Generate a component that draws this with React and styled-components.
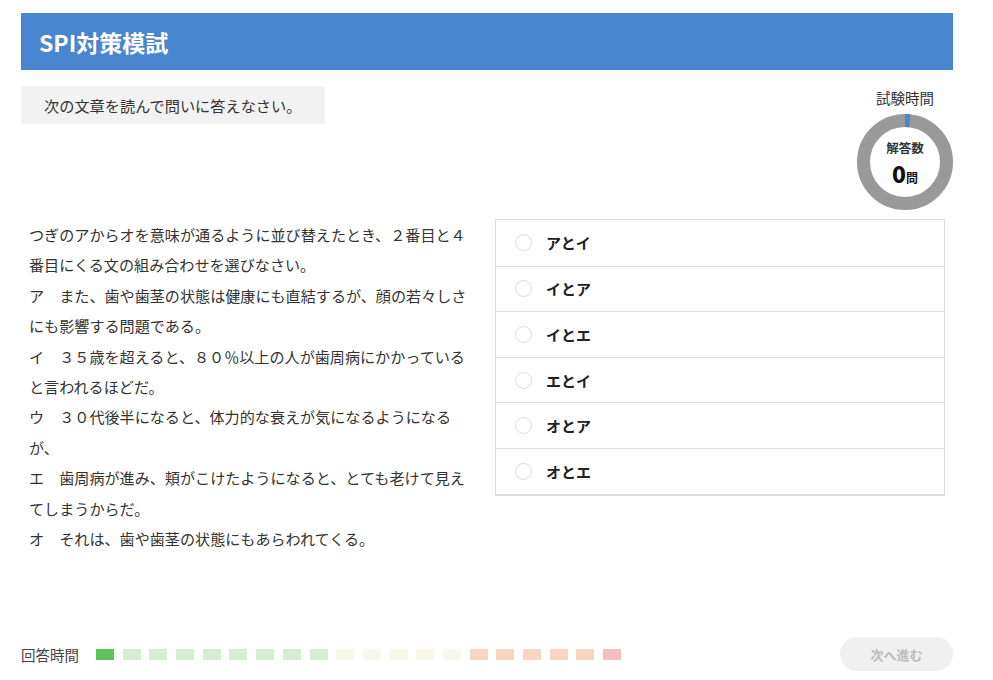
import React from "react";
import styled, { createGlobalStyle } from "styled-components";

const GlobalStyle = createGlobalStyle`
  body {
    margin: 0;
    background: #fff;
    font-family: "Noto Sans CJK JP", "Noto Sans", sans-serif;
    color: #333;
  }
`;

const question = [
  "つぎのアからオを意味が通るように並び替えたとき、２番目と４番目にくる文の組み合わせを選びなさい。",
  "ア　また、歯や歯茎の状態は健康にも直結するが、顔の若々しさにも影響する問題である。",
  "イ　３５歳を超えると、８０％以上の人が歯周病にかかっていると言われるほどだ。",
  "ウ　３０代後半になると、体力的な衰えが気になるようになるが、",
  "エ　歯周病が進み、頬がこけたようになると、とても老けて見えてしまうからだ。",
  "オ　それは、歯や歯茎の状態にもあらわれてくる。",
];

const choices = ["アとイ", "イとア", "イとエ", "エとイ", "オとア", "オとエ"];

const meter = [
  "#5ec45a",
  "#d5eed2", "#d5eed2", "#d5eed2", "#d5eed2", "#d5eed2", "#d5eed2", "#d5eed2", "#d5eed2",
  "#f8f7e9", "#f8f7e9", "#f8f7e9", "#f8f7e9", "#f8f7e9",
  "#f6d6c2", "#f6d6c2", "#f6d6c2", "#f6d6c2", "#f6d6c2",
  "#f4bdc0",
];

const Donut = () => {
  const r = 41.5;
  const c = 2 * Math.PI * r;
  return (
    <svg width="96" height="96" viewBox="0 0 96 96">
      <circle cx="48" cy="48" r={r} fill="none" stroke="#999" strokeWidth="13" />
      <circle
        cx="48"
        cy="48"
        r={r}
        fill="none"
        stroke="#4a86cf"
        strokeWidth="13"
        strokeDasharray={`5 ${c}`}
        transform="rotate(-90 48 48)"
      />
    </svg>
  );
};

const App = () => {
  return (
    <Page>
      <GlobalStyle />
      <Header>SPI対策模試</Header>

      <TopRow>
        <Instruction>次の文章を読んで問いに答えなさい。</Instruction>
        <Timer>
          <TimerLabel>試験時間</TimerLabel>
          <DonutWrap>
            <Donut />
            <DonutCenter>
              <CountLabel>解答数</CountLabel>
              <Count>
                0<small>問</small>
              </Count>
            </DonutCenter>
          </DonutWrap>
        </Timer>
      </TopRow>

      <Body>
        <Question>
          {question.map((p, i) => (
            <p key={i}>{p}</p>
          ))}
        </Question>
        <Choices>
          {choices.map((c) => (
            <Choice key={c}>
              <Radio />
              <span>{c}</span>
            </Choice>
          ))}
        </Choices>
      </Body>

      <Footer>
        <Meter>
          <MeterLabel>回答時間</MeterLabel>
          <Cells>
            {meter.map((col, i) => (
              <Cell key={i} $color={col} />
            ))}
          </Cells>
        </Meter>
        <NextButton disabled>次へ進む</NextButton>
      </Footer>
    </Page>
  );
};

const Page = styled.div`
  width: 932px;
  height: 680px;
  box-sizing: border-box;
  margin-left: 21px;
  padding: 13px 0 9px;
  display: flex;
  flex-direction: column;
`;

const Header = styled.div`
  height: 57px;
  background: #4a86cf;
  color: #fff;
  font-size: 23px;
  font-weight: 700;
  padding-left: 18px;
  display: flex;
  align-items: center;
`;

const TopRow = styled.div`
  margin-top: 16px;
  display: flex;
  justify-content: space-between;
  align-items: flex-start;
`;

const Instruction = styled.div`
  width: 304px;
  height: 38px;
  box-sizing: border-box;
  background: #f2f2f2;
  border-radius: 2px;
  padding-left: 23px;
  font-size: 15.2px;
  display: flex;
  align-items: center;
`;

const Timer = styled.div`
  margin-top: 2px;
  width: 96px;
  display: flex;
  flex-direction: column;
  align-items: center;
`;

const TimerLabel = styled.div`
  font-size: 14.5px;
  line-height: 20px;
  margin-bottom: 6px;
`;

const DonutWrap = styled.div`
  position: relative;
  width: 96px;
  height: 96px;

  svg {
    display: block;
  }
`;

const DonutCenter = styled.div`
  position: absolute;
  inset: 0;
  display: flex;
  flex-direction: column;
  align-items: center;
  justify-content: center;
`;

const CountLabel = styled.div`
  font-size: 12.5px;
  font-weight: 700;
  line-height: 18px;
  margin-bottom: 3px;
`;

const Count = styled.div`
  font-size: 23px;
  font-weight: 900;
  line-height: 26px;
  color: #111;

  small {
    font-size: 12px;
    font-weight: 700;
    line-height: 1;
  }
`;

const Body = styled.div`
  margin-top: 9px;
  display: flex;
  justify-content: space-between;
  align-items: flex-start;
`;

const Question = styled.div`
  width: 448px;
  padding-left: 8px;
  font-size: 15.1px;
  line-height: 30.4px;

  p {
    margin: 0;
  }
`;

const Choices = styled.div`
  width: 450px;
  margin-right: 8px;
  border: 1px solid #ddd;
  border-bottom-width: 2px;
  box-sizing: border-box;
`;

const Choice = styled.div`
  height: 45.6px;
  box-sizing: border-box;
  display: flex;
  align-items: center;
  padding-left: 19px;
  gap: 14px;
  font-size: 15px;
  font-weight: 700;
  color: #222;

  & + & {
    border-top: 1px solid #ddd;
  }
`;

const Radio = styled.span`
  width: 15px;
  height: 15px;
  border: 1px solid #ddd;
  border-radius: 50%;
  background: #fff;
`;

const Footer = styled.div`
  margin-top: auto;
  display: flex;
  justify-content: space-between;
  align-items: center;
`;

const Meter = styled.div`
  display: flex;
  align-items: center;
  gap: 17px;
`;

const MeterLabel = styled.span`
  font-size: 14.5px;
  color: #444;
`;

const Cells = styled.div`
  display: flex;
  gap: 8.7px;
`;

const Cell = styled.span`
  width: 18px;
  height: 11px;
  background: ${(p) => p.$color};
`;

const NextButton = styled.button`
  width: 113px;
  height: 34px;
  border: none;
  border-radius: 17px;
  background: #f0f0f0;
  color: #bbb;
  font-family: inherit;
  font-size: 13px;
  font-weight: 700;
`;

export default App;
